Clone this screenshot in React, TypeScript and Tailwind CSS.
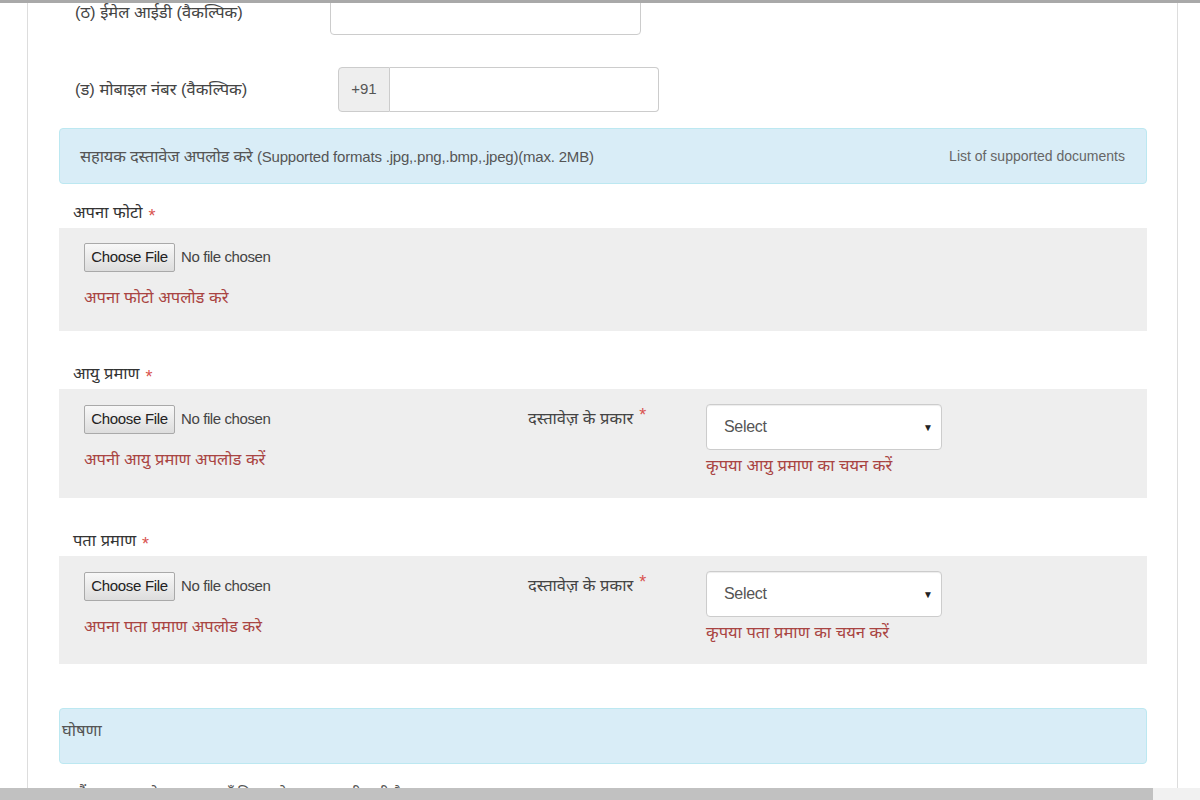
import React from "react";

const font = "font-['Liberation_Sans','Noto_Sans',sans-serif]";

function Star() {
  return <span className="ml-[6px] text-[#d9534f] text-[18px] leading-none align-top">*</span>;
}

function FileInput() {
  return (
    <div className="flex items-center gap-[6px]">
      <button className="h-[29px] w-[91px] rounded-[2px] border border-[#a9a9a9] bg-gradient-to-b from-[#f8f8f8] to-[#dddddd] text-[15px] text-[#222] tracking-[-0.3px]">
        Choose File
      </button>
      <span className="text-[15px] text-[#444] tracking-[-0.4px]">No file chosen</span>
    </div>
  );
}

function DocType({ error }: { error: string }) {
  return (
    <div className="flex">
      <div className="w-[178px] pt-[2px] text-[16.5px] text-[#444]">
        दस्तावेज़ के प्रकार
        <Star />
      </div>
      <div className="flex flex-col">
        <div className="flex h-[46px] w-[236px] items-center justify-between rounded-[4px] border border-[#cccccc] bg-white pl-[17px] pr-[8px] shadow-[inset_0_1px_1px_rgba(0,0,0,0.075)]">
          <span className="text-[16px] text-[#555] tracking-[-0.3px]">Select</span>
          <span className="text-[10px] text-[#222]">▼</span>
        </div>
        <span className="mt-[3px] text-[16.5px] text-[#a94442]">{error}</span>
      </div>
    </div>
  );
}

function Section({
  label,
  error,
  docError,
  height,
  pt,
}: {
  label: string;
  error: string;
  docError?: string;
  height: string;
  pt: string;
}) {
  return (
    <div>
      <div className="flex h-[44px] items-end pb-[3px] pl-[14px] text-[16.5px] text-[#333]">
        {label}
        <Star />
      </div>
      <div className={`flex bg-[#eeeeee] pl-[25px] ${height} ${pt}`}>
        <div className="flex w-[444px] flex-col">
          <FileInput />
          <span className="mt-[13px] text-[16.5px] text-[#a94442]">{error}</span>
        </div>
        {docError && (
          <div className="-mt-[1px]">
            <DocType error={docError} />
          </div>
        )}
      </div>
    </div>
  );
}

export default function App() {
  return (
    <div className={`relative h-[800px] w-[1200px] overflow-hidden bg-white ${font}`}>
      <div className="relative z-10 h-[3px] bg-[#a9a9a9]" />
      <div className="ml-[27px] -mt-[14px] h-[820px] w-[1151px] border-x border-[#dddddd] pl-[31px] pr-[30px]">
        {/* email */}
        <div className="flex h-[46px] items-center">
          <div className="w-[271px] pl-[16px] text-[16.5px] text-[#444]">(ठ) ईमेल आईडी (वैकल्पिक)</div>
          <div className="h-[46px] w-[311px] rounded-[4px] border border-[#cccccc] bg-white" />
        </div>

        {/* mobile */}
        <div className="mt-[32px] flex h-[45px] items-center">
          <div className="w-[279px] pl-[16px] text-[16.5px] text-[#444]">(ड) मोबाइल नंबर (वैकल्पिक)</div>
          <div className="flex h-[45px]">
            <div className="flex w-[52px] items-center justify-center rounded-l-[4px] border border-[#cccccc] bg-[#eeeeee] text-[15px] text-[#555]">
              +91
            </div>
            <div className="w-[269px] rounded-r-[4px] border border-l-0 border-[#cccccc] bg-white" />
          </div>
        </div>

        {/* info panel */}
        <div className="mt-[16px] flex h-[56px] items-center justify-between rounded-[4px] border border-[#bce8f1] bg-[#d9edf7] pl-[20px] pr-[21px] text-[#555]">
          <span className="text-[15px] tracking-[-0.2px]">
            <span className="text-[16.5px]">सहायक दस्तावेज अपलोड करे </span>
            (Supported formats .jpg,.png,.bmp,.jpeg)(max. 2MB)
          </span>
          <span className="text-[14px] font-light text-[#666]">List of supported documents</span>
        </div>

        <Section label="अपना फोटो" error="अपना फोटो अपलोड करे" height="h-[103px]" pt="pt-[15px]" />

        <div className="mt-[14px]">
          <Section
            label="आयु प्रमाण"
            error="अपनी आयु प्रमाण अपलोड करें"
            docError="कृपया आयु प्रमाण का चयन करें"
            height="h-[109px]"
            pt="pt-[16px]"
          />
        </div>

        <div className="mt-[14px]">
          <Section
            label="पता प्रमाण"
            error="अपना पता प्रमाण अपलोड करे"
            docError="कृपया पता प्रमाण का चयन करें"
            height="h-[108px]"
            pt="pt-[16px]"
          />
        </div>

        {/* declaration */}
        <div className="mt-[44px] h-[56px] rounded-[4px] border border-[#bce8f1] bg-[#d9edf7] pl-[2px] pt-[9px] text-[16.5px] text-[#555]">
          घोषणा
        </div>

        <div className="mt-[18px] pl-[18px] text-[16px] text-[#555]">
          मैं एतद्द्वारा घोषणा करता हूँ कि उपरोक्त जानकारी सही है
        </div>
      </div>

      {/* horizontal scrollbar */}
      <div className="absolute bottom-0 left-0 flex h-[12px] w-[1200px] bg-[#f1f1f1]">
        <div className="h-full w-[1153px] bg-[#c1c1c1]" />
      </div>
    </div>
  );
}
